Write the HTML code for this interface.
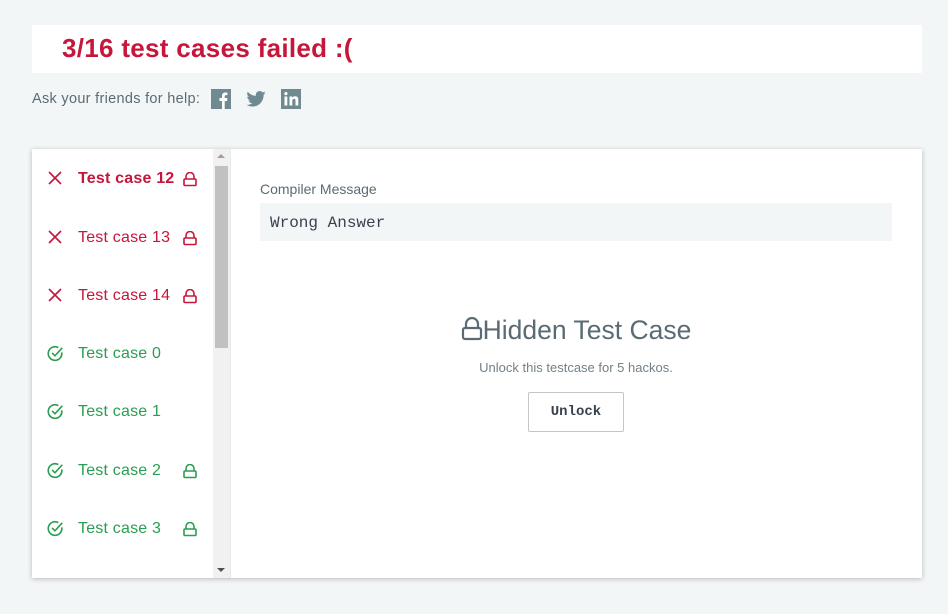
<!DOCTYPE html>
<html><head><meta charset="utf-8"><style>
body{margin:0;background:#f3f6f7;font-family:"Liberation Sans",sans-serif;width:948px;height:614px;position:relative;overflow:hidden}
.a{position:absolute}
.hdr{left:32px;top:25px;width:890px;height:48px;background:#fff}
.hdr span{position:absolute;left:30px;top:8px;font-size:26px;font-weight:bold;color:#c7163b;letter-spacing:0.3px}
.share{left:32px;top:91px;font-size:14.5px;color:#5b6b73;letter-spacing:0.3px}
.panel{left:32px;top:149px;width:890px;height:429px;background:#fff;box-shadow:0 1px 5px rgba(0,0,0,.25)}
.sb{left:181px;top:0;width:17px;height:429px;background:#f1f1f1}
.thumb{left:183px;top:17px;width:13px;height:182px;background:#c1c1c1}
.item{position:absolute;left:0;width:180px;height:24px;font-size:16px}
.item .t{position:absolute;left:46px;top:4px;letter-spacing:0.2px}
.red{color:#c7163b}.grn{color:#2a9e50}
</style></head><body>
<div class="a hdr"><span>3/16 test cases failed :(</span></div>
<div class="a share">Ask your friends for help:</div>
<svg class="a" style="left:211px;top:89px" width="20" height="20" viewBox="0 0 20 20"><rect width="20" height="20" fill="#6f8b91"/><path d="M11 20v-8h-2.5v-3H11V7c0-2.3 1.3-3.5 3.4-3.5 1 0 1.8.1 2 .1v2.5h-1.4c-1.1 0-1.3.5-1.3 1.3V9h2.7l-.4 3h-2.3v8z" fill="#fff"/></svg>
<svg class="a" style="left:246px;top:91px" width="20" height="16" viewBox="0 0 24 20"><path d="M24 2.4c-.9.4-1.8.6-2.8.8 1-.6 1.8-1.6 2.2-2.7-1 .6-2 1-3.1 1.2A4.9 4.9 0 0 0 11.9 6 14 14 0 0 1 1.7.9a4.900 4.900 0 0 0 1.5 6.6c-.8 0-1.6-.2-2.2-.6 0 2.4 1.700 4.400 3.900 4.800-.7.2-1.500.2-2.200.1.600 2 2.400 3.400 4.600 3.400A9.900 9.900 0 0 1 0 17.200 14 14 0 0 0 7.500 19.400c9.100 0 14-7.500 14-14v-.6c1-.7 1.800-1.600 2.500-2.400z" fill="#6f8b91"/></svg>
<svg class="a" style="left:281px;top:89px" width="20" height="20" viewBox="0 0 20 20"><rect width="20" height="20" fill="#6f8b91"/><rect x="3.5" y="7.5" width="2.8" height="9" fill="#fff"/><circle cx="4.9" cy="4.6" r="1.6" fill="#fff"/><path d="M8.5 7.5h2.7v1.3c.5-.9 1.6-1.5 2.900-1.500 2.500 0 3.200 1.500 3.200 3.900v5.300h-2.800v-4.700c0-1.200-.3-2-1.400-2-1.200 0-1.800.8-1.800 2.100v4.600H8.500z" fill="#fff"/></svg>
<div class="a panel">
 <div class="a sb"></div><div class="a thumb"></div>
 <div class="a" style="left:185px;top:5px;width:0;height:0;border-left:4px solid transparent;border-right:4px solid transparent;border-bottom:4px solid #a0a0a0"></div>
 <div class="a" style="left:185px;top:419px;width:0;height:0;border-left:4px solid transparent;border-right:4px solid transparent;border-top:4px solid #505050"></div>
 <div class="a" style="left:198px;top:0;width:1px;height:429px;background:#e6e9ea"></div>

 <div class="item red" style="top:17px"><svg class="a" style="left:16px;top:5px" width="14" height="14"><path d="M1 1L13 13M13 1L1 13" stroke="#c7163b" stroke-width="1.6"/></svg><span class="t" style="font-weight:bold">Test case 12</span><svg class="a" style="left:151px;top:6px" width="14" height="15"><path d="M3 7V4.5a4 4 0 0 1 8 0V7" fill="none" stroke="#c7163b" stroke-width="1.6"/><rect x="1" y="7" width="12" height="6.5" rx="1" fill="none" stroke="#c7163b" stroke-width="1.6"/></svg></div>
 <div class="item red" style="top:76px"><svg class="a" style="left:16px;top:5px" width="14" height="14"><path d="M1 1L13 13M13 1L1 13" stroke="#c7163b" stroke-width="1.6"/></svg><span class="t">Test case 13</span><svg class="a" style="left:151px;top:6px" width="14" height="15"><path d="M3 7V4.5a4 4 0 0 1 8 0V7" fill="none" stroke="#c7163b" stroke-width="1.6"/><rect x="1" y="7" width="12" height="6.5" rx="1" fill="none" stroke="#c7163b" stroke-width="1.6"/></svg></div>
 <div class="item red" style="top:134px"><svg class="a" style="left:16px;top:5px" width="14" height="14"><path d="M1 1L13 13M13 1L1 13" stroke="#c7163b" stroke-width="1.6"/></svg><span class="t">Test case 14</span><svg class="a" style="left:151px;top:6px" width="14" height="15"><path d="M3 7V4.5a4 4 0 0 1 8 0V7" fill="none" stroke="#c7163b" stroke-width="1.6"/><rect x="1" y="7" width="12" height="6.5" rx="1" fill="none" stroke="#c7163b" stroke-width="1.6"/></svg></div>

 <div class="item grn" style="top:192px"><svg class="a" style="left:15px;top:4px" width="17" height="17" viewBox="0 0 15 15"><path d="M13 6.5A6 6 0 1 1 10 2.3" fill="none" stroke="#2a9e50" stroke-width="1.4"/><path d="M4.5 7l2.5 2.5L13.5 2.5" fill="none" stroke="#2a9e50" stroke-width="1.4"/></svg><span class="t">Test case 0</span></div>
 <div class="item grn" style="top:250px"><svg class="a" style="left:15px;top:4px" width="17" height="17" viewBox="0 0 15 15"><path d="M13 6.5A6 6 0 1 1 10 2.3" fill="none" stroke="#2a9e50" stroke-width="1.4"/><path d="M4.5 7l2.5 2.5L13.5 2.5" fill="none" stroke="#2a9e50" stroke-width="1.4"/></svg><span class="t">Test case 1</span></div>
 <div class="item grn" style="top:309px"><svg class="a" style="left:15px;top:4px" width="17" height="17" viewBox="0 0 15 15"><path d="M13 6.5A6 6 0 1 1 10 2.3" fill="none" stroke="#2a9e50" stroke-width="1.4"/><path d="M4.5 7l2.5 2.5L13.5 2.5" fill="none" stroke="#2a9e50" stroke-width="1.4"/></svg><span class="t">Test case 2</span><svg class="a" style="left:151px;top:6px" width="14" height="15"><path d="M3 7V4.5a4 4 0 0 1 8 0V7" fill="none" stroke="#2a9e50" stroke-width="1.6"/><rect x="1" y="7" width="12" height="6.5" rx="1" fill="none" stroke="#2a9e50" stroke-width="1.6"/></svg></div>
 <div class="item grn" style="top:367px"><svg class="a" style="left:15px;top:4px" width="17" height="17" viewBox="0 0 15 15"><path d="M13 6.5A6 6 0 1 1 10 2.3" fill="none" stroke="#2a9e50" stroke-width="1.4"/><path d="M4.5 7l2.5 2.5L13.5 2.5" fill="none" stroke="#2a9e50" stroke-width="1.4"/></svg><span class="t">Test case 3</span><svg class="a" style="left:151px;top:6px" width="14" height="15"><path d="M3 7V4.5a4 4 0 0 1 8 0V7" fill="none" stroke="#2a9e50" stroke-width="1.6"/><rect x="1" y="7" width="12" height="6.5" rx="1" fill="none" stroke="#2a9e50" stroke-width="1.6"/></svg></div>

 <div class="a" style="left:228px;top:32px;font-size:14px;color:#5b6b73">Compiler Message</div>
 <div class="a" style="left:228px;top:54px;width:632px;height:38px;background:#f3f6f7"></div>
 <div class="a" style="left:238px;top:65px;font-family:'Liberation Mono',monospace;font-size:16px;color:#39424e">Wrong Answer</div>
 <div class="a" style="left:228px;top:166px;width:632px;text-align:center;font-size:26.5px;color:#5b6b73"><svg style="vertical-align:-2px" width="22" height="24" viewBox="0 0 22 24"><path d="M5 11V7a6 6 0 0 1 12 0v4" fill="none" stroke="#5b6b73" stroke-width="2.2"/><rect x="2" y="11" width="18" height="11" rx="2" fill="none" stroke="#5b6b73" stroke-width="2.2"/></svg>Hidden Test Case</div>
 <div class="a" style="left:228px;top:211px;width:632px;text-align:center;font-size:13px;color:#738087">Unlock this testcase for 5 hackos.</div>
 <div class="a" style="left:496px;top:243px;width:94px;height:38px;border:1px solid #c2c7cb;border-radius:2px;text-align:center;line-height:39px;font-family:'Liberation Mono',monospace;font-weight:bold;font-size:14px;color:#39424e">Unlock</div>
</div>
</body></html>
